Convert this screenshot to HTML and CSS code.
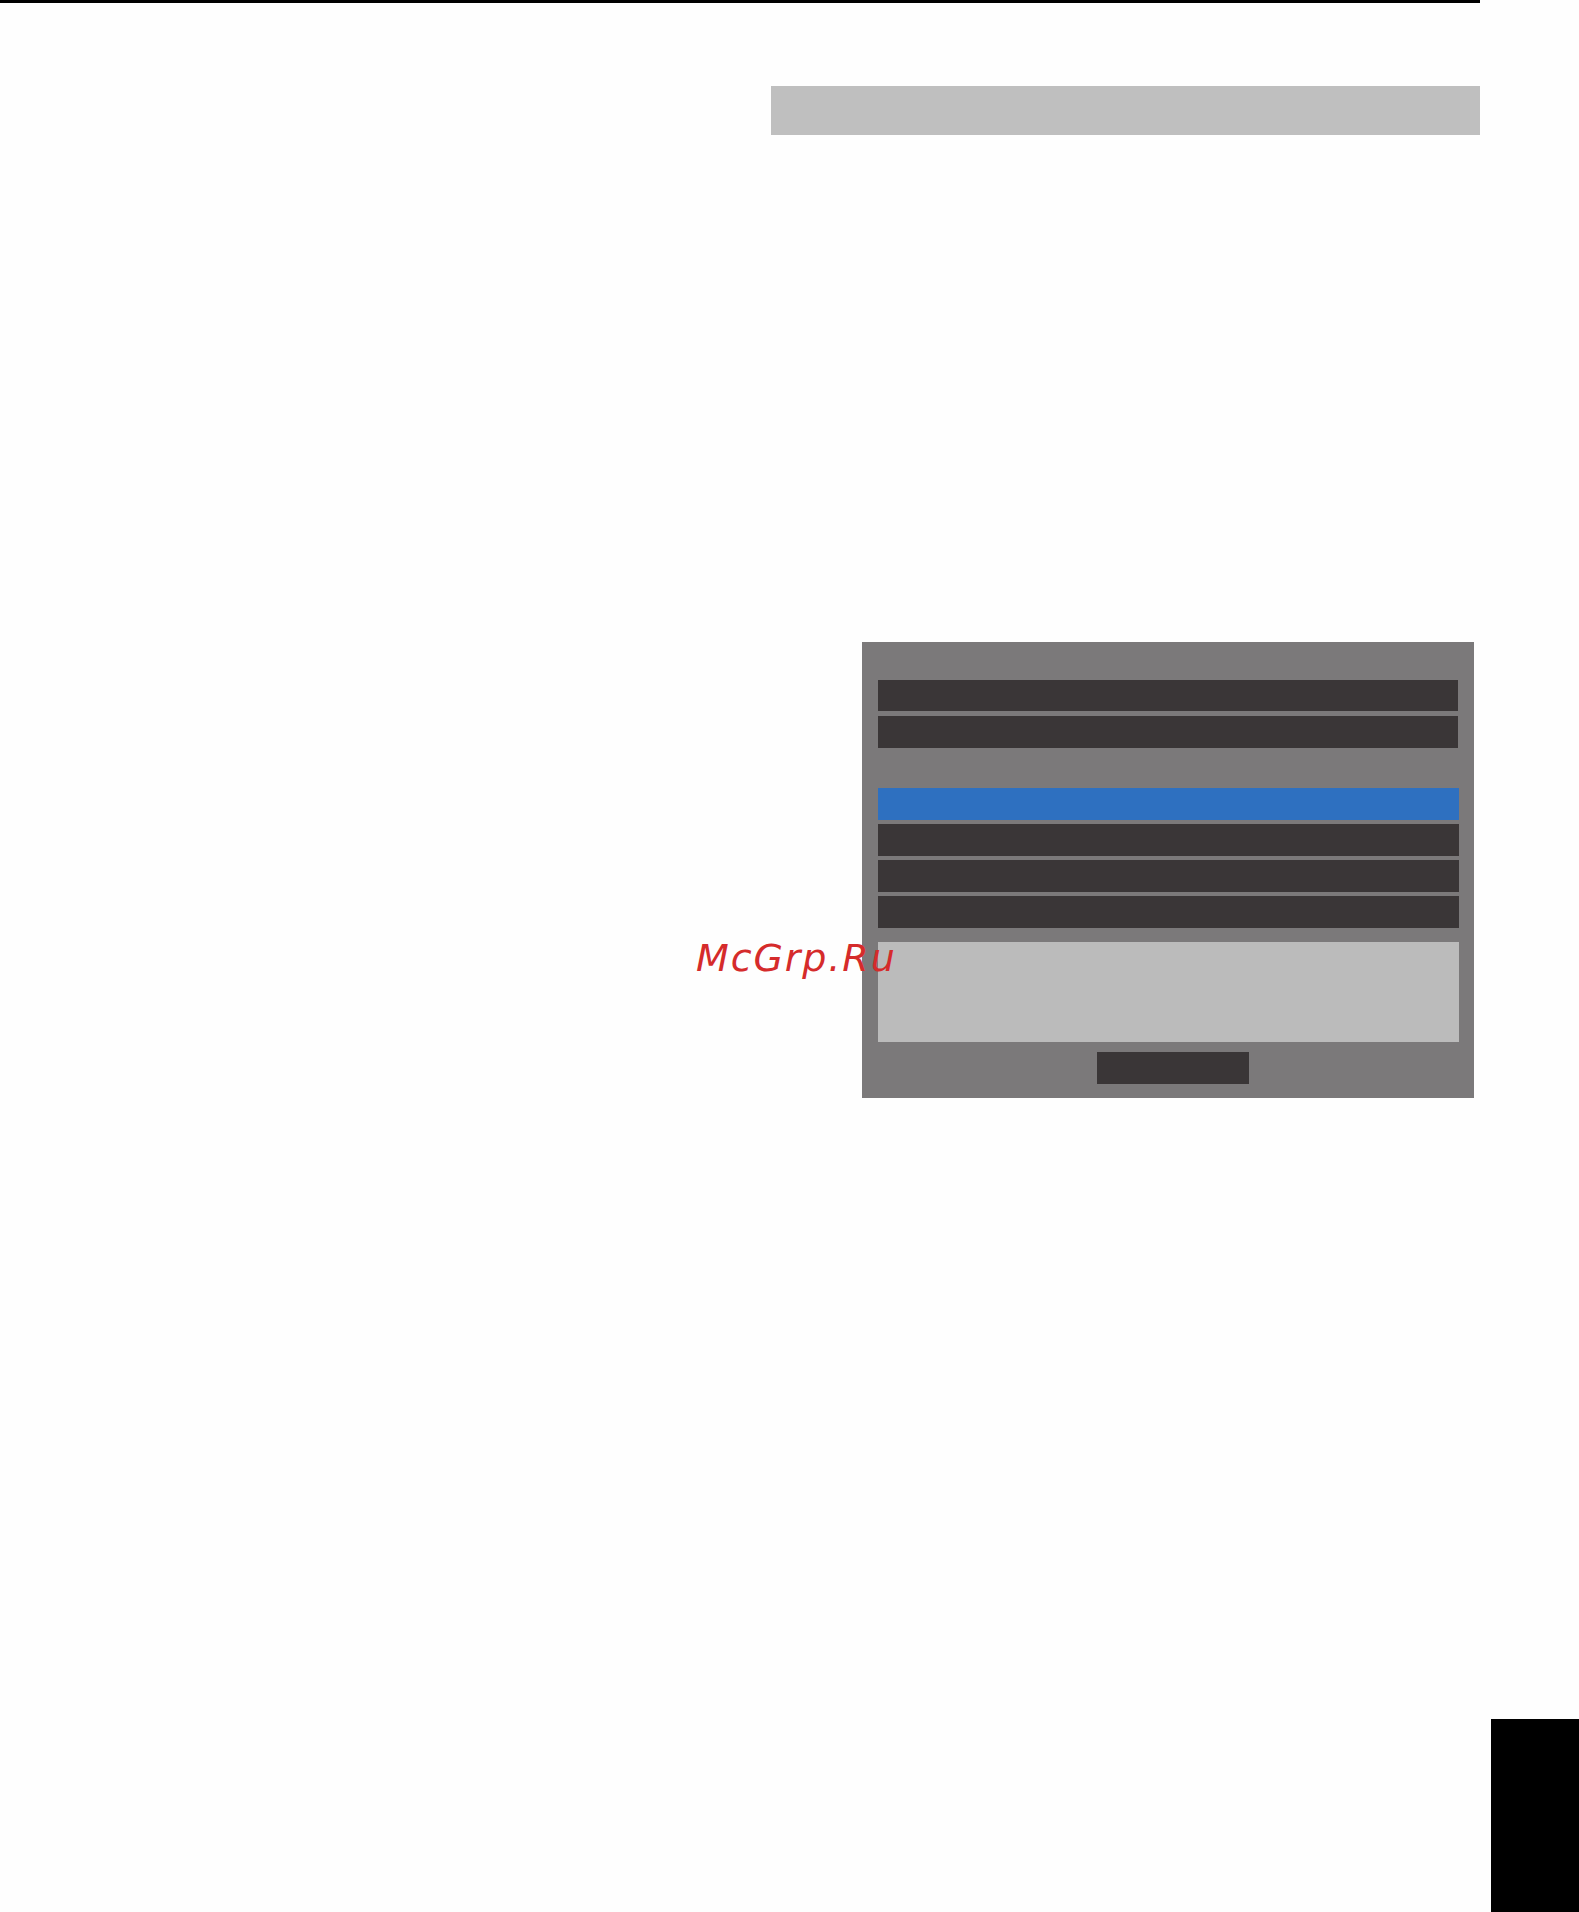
FILE: index.html
```html
<!DOCTYPE html>
<html lang="ru">
<head>
<meta charset="utf-8">
<title>Menu</title>
<link rel="stylesheet" href="styles.css">
</head>
<body>
<div class="page">
  <div class="top-rule"></div>
  <div class="section-head"></div>
  <div class="osd">
    <div class="osd-row short"></div>
    <div class="osd-row short second"></div>
    <div class="osd-list">
      <div class="osd-row active"></div>
      <div class="osd-row"></div>
      <div class="osd-row"></div>
      <div class="osd-row"></div>
    </div>
    <div class="osd-info"></div>
    <div class="osd-button"></div>
  </div>
  <div class="page-tab"></div>
  <div class="watermark">McGrp.Ru</div>
</div>
</body>
</html>
```
FILE: styles.css
```css
html, body {
  margin: 0;
  padding: 0;
  background: #fefefe;
  overflow: hidden;
}
.page {
  position: relative;
  width: 1579px;
  height: 1912px;
  display: flex;
  flex-direction: column;
}
.top-rule {
  width: 1480px;
  height: 3px;
  background: #000;
}
.section-head {
  margin-top: 83px;
  margin-left: 771px;
  width: 709px;
  height: 49px;
  background: #bfbfbf;
}
.osd {
  margin-top: 507px;
  margin-left: 862px;
  width: 612px;
  height: 456px;
  box-sizing: border-box;
  padding: 38px 15px 14px 16px;
  background: #7b797a;
  display: flex;
  flex-direction: column;
}
.osd-row {
  height: 32px;
  background: #3a3637;
}
.osd-row.short {
  height: 31px;
  margin-right: 1px;
}
.osd-row.short.second {
  height: 32px;
  margin-top: 5px;
}
.osd-list {
  margin-top: 40px;
  display: flex;
  flex-direction: column;
  gap: 4px;
}
.osd-row.active {
  background: #2e70c0;
}
.osd-info {
  margin-top: 14px;
  height: 100px;
  background: #bbbbbb;
}
.osd-button {
  margin-top: 10px;
  margin-left: 219px;
  width: 152px;
  height: 32px;
  background: #3a3637;
}
.page-tab {
  margin-top: 621px;
  align-self: flex-end;
  width: 88px;
  height: 193px;
  background: #000;
}
.watermark {
  position: absolute;
  left: 696px;
  top: 936px;
  font-family: "DejaVu Sans", sans-serif;
  font-style: oblique;
  font-size: 38px;
  letter-spacing: 1.9px;
  line-height: 44px;
  color: #d52b2b;
}
```
